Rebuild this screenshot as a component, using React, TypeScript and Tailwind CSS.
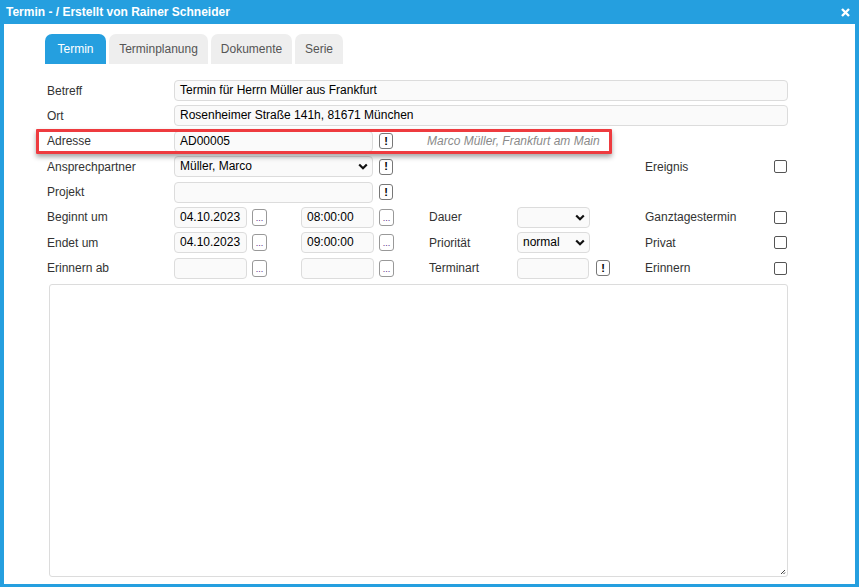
import React from 'react';

const font = { fontFamily: '"Liberation Sans", Arial, sans-serif' };

const inputCls =
  'h-[21px] rounded-[4px] border border-[#dcdcdc] bg-[#fafafa] px-[5px] text-[12px] leading-[19px] text-black outline-none';

const Label: React.FC<{ text: string; w?: string }> = ({ text, w = 'w-[127px]' }) => (
  <div className={`${w} shrink-0 text-[12px] text-[#333]`}>{text}</div>
);

const Bang: React.FC = () => (
  <button
    type="button"
    className="flex h-[16px] w-[14px] shrink-0 items-center justify-center rounded-[3px] border border-[#777] bg-white text-[11px] font-bold leading-none text-black"
  >
    !
  </button>
);

const Dots: React.FC = () => (
  <button
    type="button"
    className="flex h-[17px] w-[15px] shrink-0 items-end justify-center rounded-[3px] border border-[#999] bg-white pb-[2px] text-[9px] leading-none text-[#5a2a8a]"
  >
    ...
  </button>
);

const Check: React.FC = () => (
  <div className="h-[13px] w-[13px] shrink-0 rounded-[2px] border border-[#555] bg-white" />
);

const Chevron: React.FC = () => (
  <svg width="10" height="7" viewBox="0 0 10 7" className="shrink-0">
    <path d="M1.2 1.5 5 5.2 8.8 1.5" fill="none" stroke="#111" strokeWidth="2.2" />
  </svg>
);

const Select: React.FC<{ value?: string; w: string }> = ({ value = '', w }) => (
  <div className={`${inputCls} ${w} flex shrink-0 items-center justify-between pr-[4px]`}>
    <span>{value}</span>
    <Chevron />
  </div>
);

const Input: React.FC<{ value?: string; w: string }> = ({ value = '', w }) => (
  <div className={`${inputCls} ${w} shrink-0`}>{value}</div>
);

const dateRows = [
  { label: 'Beginnt um', date: '04.10.2023', time: '08:00:00', mid: 'Dauer', sel: '', far: 'Ganztagestermin' },
  { label: 'Endet um', date: '04.10.2023', time: '09:00:00', mid: 'Priorität', sel: 'normal', far: 'Privat' },
  { label: 'Erinnern ab', date: '', time: '', mid: 'Terminart', sel: null as string | null, far: 'Erinnern' },
];

export default function App() {
  return (
    <div style={font} className="flex h-[587px] w-[859px] flex-col bg-[#259fdf]">
      <div className="flex h-[24px] shrink-0 items-center justify-between pl-[6px] pr-[9px]">
        <span className="text-[12px] font-bold text-white">Termin - / Erstellt von Rainer Schneider</span>
        <svg width="9" height="9" viewBox="0 0 9 9">
          <path d="M1 1 8 8M8 1 1 8" stroke="white" strokeWidth="2.4" />
        </svg>
      </div>
      <div className="mx-[4px] mb-[3px] flex flex-1 flex-col bg-white pl-[41px] pt-[10px]">
        {/* tabs */}
        <div className="flex gap-[3px]">
          <div className="flex h-[30px] w-[61px] items-center justify-center rounded-t-[7px] bg-[#259fdf] text-[12px] text-white">
            Termin
          </div>
          <div className="flex h-[30px] w-[99px] items-center justify-center rounded-t-[7px] bg-[#eeeeee] text-[12px] text-[#555]">
            Terminplanung
          </div>
          <div className="flex h-[30px] w-[81px] items-center justify-center rounded-t-[7px] bg-[#eeeeee] text-[12px] text-[#555]">
            Dokumente
          </div>
          <div className="flex h-[30px] w-[48px] items-center justify-center rounded-t-[7px] bg-[#eeeeee] text-[12px] text-[#555]">
            Serie
          </div>
        </div>

        <div className="ml-[2px] mt-[16px] flex flex-col gap-[4.4px]">
          <div className="flex h-[21px] items-center">
            <Label text="Betreff" />
            <Input value="Termin für Herrn Müller aus Frankfurt" w="w-[614px]" />
          </div>
          <div className="flex h-[21px] items-center">
            <Label text="Ort" />
            <Input value="Rosenheimer Straße 141h, 81671 München" w="w-[614px]" />
          </div>
          <div className="relative flex h-[21px] items-center">
            <div className="pointer-events-none absolute -left-[11px] -top-[2px] h-[25px] w-[576px] rounded-[1px] border-[3px] border-[#ee3b3f] shadow-[0_3px_5px_rgba(0,0,0,0.35)]" />
            <Label text="Adresse" />
            <Input value="AD00005" w="w-[199px]" />
            <div className="ml-[6px]">
              <Bang />
            </div>
            <span className="ml-[34px] text-[12px] italic text-[#8a8a8a]">Marco Müller, Frankfurt am Main</span>
          </div>
          <div className="flex h-[21px] items-center">
            <Label text="Ansprechpartner" />
            <Select value="Müller, Marco" w="w-[199px]" />
            <div className="ml-[6px]">
              <Bang />
            </div>
            <div className="ml-[252px] flex items-center">
              <Label text="Ereignis" w="w-[129px]" />
              <Check />
            </div>
          </div>
          <div className="flex h-[21px] items-center">
            <Label text="Projekt" />
            <Input w="w-[199px]" />
            <div className="ml-[6px]">
              <Bang />
            </div>
          </div>
          {dateRows.map((r) => (
            <div key={r.label} className="flex h-[21px] items-center">
              <Label text={r.label} />
              <Input value={r.date} w="w-[73px]" />
              <div className="ml-[5px]">
                <Dots />
              </div>
              <div className="ml-[34px]">
                <Input value={r.time} w="w-[73px]" />
              </div>
              <div className="ml-[5px]">
                <Dots />
              </div>
              <div className="ml-[35px] flex items-center">
                <Label text={r.mid} w="w-[88px]" />
                {r.sel === null ? (
                  <>
                    <Input w="w-[72px]" />
                    <div className="ml-[7px]">
                      <Bang />
                    </div>
                    <div className="w-[35px]" />
                  </>
                ) : (
                  <>
                    <Select value={r.sel} w="w-[73px]" />
                    <div className="w-[55px]" />
                  </>
                )}
                <Label text={r.far} w="w-[129px]" />
                <Check />
              </div>
            </div>
          ))}
        </div>

        <div className="relative ml-[4px] mt-[5px] mb-[7px] h-[293px] w-[739px] rounded-[3px] border border-[#dcdcdc] bg-white">
          <svg width="6" height="6" viewBox="0 0 6 6" className="absolute bottom-[1px] right-[1px]">
            <path d="M5 1 1 5M5 3.5 3.5 5" stroke="#444" strokeWidth="1" />
          </svg>
        </div>
      </div>
    </div>
  );
}
